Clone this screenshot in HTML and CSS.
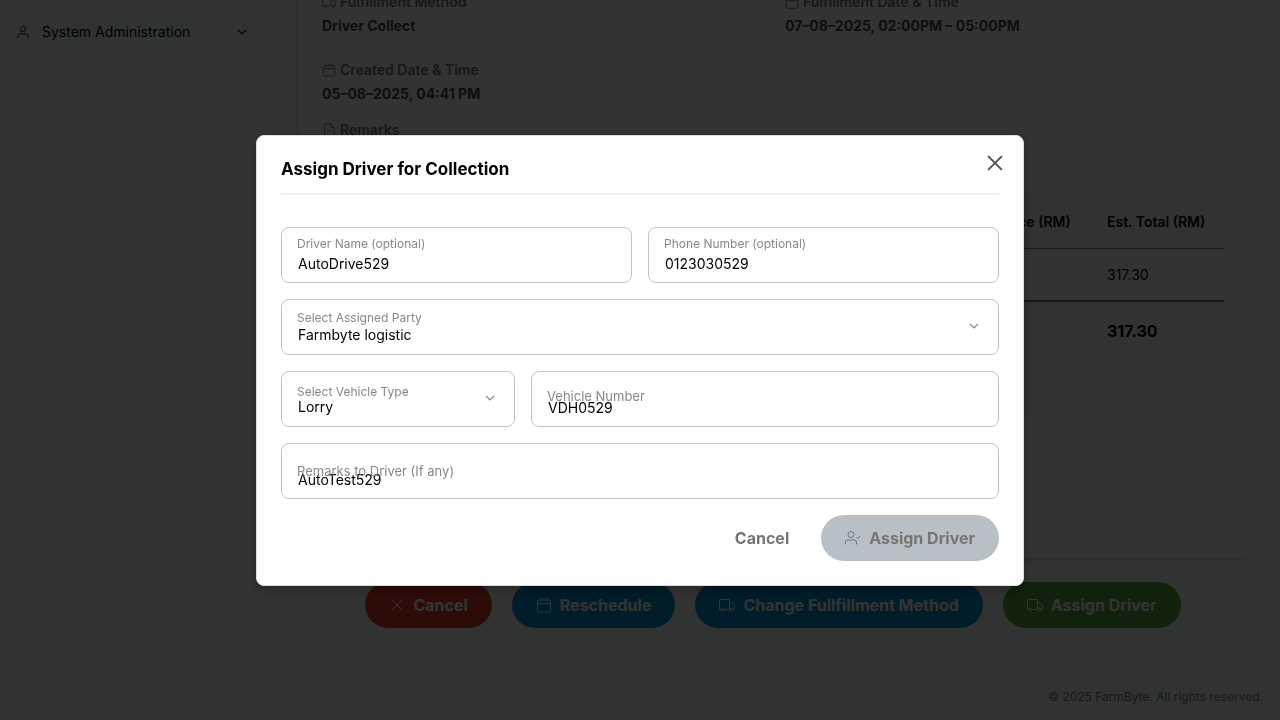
FILE: index.html
```html
<!DOCTYPE html>
<html lang="en">
<head>
<meta charset="utf-8">
<meta name="viewport" content="width=device-width, initial-scale=1">
<title>FarmByte - Assign Driver</title>
<link rel="stylesheet" href="styles.css">
</head>
<body>
<svg class="sprite" aria-hidden="true">
  <symbol id="calendar" viewBox="0 0 16 16"><rect x="1.5" y="3" width="13" height="12" rx="1"/><path d="M1.500 6.500h13M4.500 1v3.500M8 1v2M11.500 1v3.500"/></symbol>
  <symbol id="truck" viewBox="0 0 16 16"><path d="M2 12.500H.500v-10H10.500v10H5.500M10.500 5.500h2.500l2.500 3v4h-1M10.500 12.500h.500"/><circle cx="3.700" cy="12.800" r="1.600"/><circle cx="12.700" cy="12.800" r="1.600"/></symbol>
  <symbol id="file" viewBox="0 0 16 16"><path d="M3 1h7l4 4v10H3zM10 1v4h4M6 9h4.500"/></symbol>
  <symbol id="user" viewBox="0 0 16 16"><circle cx="8" cy="4.500" r="3"/><path d="M2 15v-2.500a2.500 2.500 0 0 1 2.500-2.500h7a2.500 2.500 0 0 1 2.500 2.500V15"/></symbol>
  <symbol id="user-check" viewBox="0 0 16 16"><circle cx="6" cy="4.500" r="3"/><path d="M.500 14.500v-2.500a2 2 0 0 1 2-2h7a2 2 0 0 1 2 2v2.500M11.300 7l1.400 1.500 3-3"/></symbol>
  <symbol id="cross" viewBox="0 0 16 16"><path d="M3 3l10 10M13 3L3 13"/></symbol>
  <symbol id="chevron" viewBox="0 0 12 12"><path d="M2 4l4 4 4-4"/></symbol>
</svg>

<div class="app">
  <nav class="sidebar">
    <button class="nav-item" type="button">
      <svg class="icon"><use href="#user"/></svg>
      <span>System Administration</span>
      <svg class="chevron"><use href="#chevron"/></svg>
    </button>
  </nav>

  <main class="main">
    <section class="card">
      <dl class="details">
        <div>
          <dt><svg class="icon"><use href="#truck"/></svg>Fulfillment Method</dt>
          <dd>Driver Collect</dd>
        </div>
        <div>
          <dt><svg class="icon"><use href="#calendar"/></svg>Fulfillment Date &amp; Time</dt>
          <dd>07–08–2025, 02:00PM – 05:00PM</dd>
        </div>
        <div>
          <dt><svg class="icon"><use href="#calendar"/></svg>Created Date &amp; Time</dt>
          <dd>05–08–2025, 04:41 PM</dd>
        </div>
      </dl>
      <dl class="remarks">
        <dt><svg class="icon"><use href="#file"/></svg>Remarks</dt>
        <dd></dd>
      </dl>
      <table class="items">
        <thead>
          <tr><td></td><th class="col-price" scope="col">Est. Price (RM)</th><th class="col-total" scope="col">Est. Total (RM)</th></tr>
        </thead>
        <tbody>
          <tr><td></td><td></td><td>317.30</td></tr>
        </tbody>
        <tfoot>
          <tr><td></td><td></td><td>317.30</td></tr>
        </tfoot>
      </table>
    </section>

    <div class="actions">
      <button class="btn btn-red" type="button"><svg class="icon"><use href="#cross"/></svg>Cancel</button>
      <button class="btn btn-blue" type="button"><svg class="icon"><use href="#calendar"/></svg>Reschedule</button>
      <button class="btn btn-blue" type="button"><svg class="icon"><use href="#truck"/></svg>Change Fullfillment Method</button>
      <button class="btn btn-green" type="button"><svg class="icon"><use href="#truck"/></svg>Assign Driver</button>
    </div>

    <footer class="footer">© 2025 FarmByte. All rights reserved.</footer>
  </main>
</div>

<div class="overlay">
  <form class="modal" role="dialog" aria-modal="true" aria-labelledby="modal-title">
    <h2 class="modal-title" id="modal-title">Assign Driver for Collection</h2>
    <button class="close" type="button" aria-label="Close"><svg><use href="#cross"/></svg></button>

    <div class="fields">
      <div class="row">
        <div class="field">
          <label class="label-top" for="driver">Driver Name (optional)</label>
          <input id="driver" type="text" value="AutoDrive529">
        </div>
        <div class="field">
          <label class="label-top" for="phone">Phone Number (optional)</label>
          <input id="phone" type="tel" value="0123030529">
        </div>
      </div>
      <div class="field">
        <label class="label-select" for="party">Select Assigned Party</label>
        <select id="party"><option>Farmbyte logistic</option></select>
        <svg class="chevron"><use href="#chevron"/></svg>
      </div>
      <div class="row row-vehicle">
        <div class="field">
          <label class="label-select-low" for="type">Select Vehicle Type</label>
          <select id="type"><option>Lorry</option></select>
          <svg class="chevron"><use href="#chevron"/></svg>
        </div>
        <div class="field">
          <label class="label-low" for="number">Vehicle Number</label>
          <input id="number" type="text" value="VDH0529">
        </div>
      </div>
      <div class="field">
        <label class="label-middle" for="remarks">Remarks to Driver (If any)</label>
        <input id="remarks" type="text" value="AutoTest529">
      </div>
    </div>

    <div class="modal-actions">
      <button class="btn btn-text" type="button">Cancel</button>
      <button class="btn btn-disabled" type="submit" disabled><svg class="icon"><use href="#user-check"/></svg>Assign Driver</button>
    </div>
  </form>
</div>
</body>
</html>
```
FILE: styles.css
```css
* { box-sizing: border-box; }

body {
  margin: 0;
  background: #f6fdfa;
  color: #000;
  font: 14px/24px Inter, "Liberation Sans", sans-serif;
}

button, input, select { font: inherit; color: inherit; }
button { cursor: pointer; }

svg { flex: none; fill: none; stroke: currentColor; }
.sprite { display: none; }
.icon { width: 14px; height: 14px; }
.chevron { width: 12px; height: 12px; stroke-width: 1.2; }

/* Page */
.app {
  display: grid;
  grid-template-columns: 298px minmax(0, 1fr);
  height: 100vh;
  overflow: hidden;
}

.sidebar {
  padding: 20px 49px 0 16px;
  border-right: 1px solid #f0f5f3;
}
.nav-item {
  display: flex;
  align-items: center;
  gap: 12px;
  width: 100%;
  padding: 0;
  border: 0;
  background: none;
}
.nav-item .chevron { margin-left: auto; }

.main {
  display: flex;
  flex-direction: column;
  justify-content: flex-end;
  min-height: 0;
  padding-bottom: 15px;
}

.card {
  margin-right: 32px;
  padding: 24px 24px 145px;
  border-radius: 8px;
  background: #fff;
  box-shadow: 0 2px 4px rgb(0 0 0 / 14%);
}
.details {
  display: grid;
  grid-template-columns: 1fr 1fr;
  gap: 20px 24px;
  margin: 0 0 12px;
}
.remarks { margin: 0 0 30px; }
dt {
  display: flex;
  align-items: center;
  gap: 4px;
  color: #757575;
  font-weight: 600;
}
dd {
  min-height: 24px;
  margin: 0;
  color: #484848;
  font-weight: 700;
}

.items {
  width: 100%;
  border-collapse: collapse;
}
.items th, .items td {
  height: 52px;
  padding: 14px 16px 12px;
  text-align: left;
  vertical-align: top;
}
.items thead { background: #f8f8f8; }
.items thead tr { border-bottom: 1px solid #808080; }
.items tbody tr { border-bottom: 2px solid #707070; }
.items tbody td { height: 53px; }
.items th { font-weight: 600; }
.col-price { width: 136px; }
.col-total { width: 133px; }
.items tfoot { background: #f8f8f8; }
.items tfoot td {
  height: 112px;
  padding-top: 17px;
  font-size: 16px;
  font-weight: 700;
}

.btn {
  display: inline-flex;
  align-items: center;
  gap: 8px;
  height: 46px;
  padding: 0 24px;
  border: 0;
  border-radius: 23px;
  color: #fff;
  font-size: 16px;
  font-weight: 700;
  white-space: nowrap;
}
.btn .icon { width: 16px; height: 16px; }
.btn-red { background: #e23a24; }
.btn-blue { background: #048fcb; }
.btn-green { background: #53a838; }

.actions {
  display: flex;
  justify-content: center;
  gap: 20px;
  margin: 24px 32px 61px 0;
}

.footer {
  padding-right: 17px;
  color: #7c7c7c;
  font-size: 12px;
  line-height: 16px;
  text-align: right;
}

/* Dialog */
.overlay {
  position: fixed;
  inset: 0;
  display: grid;
  place-items: center;
  background: rgb(0 0 0 / 80%);
}
.modal {
  position: relative;
  width: 60%;
  padding: 24px;
  border: 1px solid #ddd;
  border-radius: 8px;
  background: #fff;
  box-shadow: 0 4px 12px rgb(0 0 0 / 30%);
}
.modal-title {
  margin: 0 0 32px;
  padding-bottom: 15px;
  border-bottom: 2px solid #f0f0f0;
  font-size: 17px;
  font-weight: 700;
  line-height: 18px;
}
.close {
  position: absolute;
  top: 15px;
  right: 16px;
  display: grid;
  place-items: center;
  width: 24px;
  height: 24px;
  padding: 0;
  border: 0;
  background: none;
  color: #555;
}
.close svg { width: 22px; height: 22px; stroke-width: 1.5; }

.fields {
  display: grid;
  gap: 16px;
}
.row {
  display: grid;
  grid-template-columns: 1fr 1fr;
  gap: 16px;
}
.row-vehicle { grid-template-columns: 1fr 2fr; }

.field { position: relative; }
.field input, .field select {
  display: block;
  width: 100%;
  height: 56px;
  padding: 18px 16px 0;
  border: 1px solid #c2c2c2;
  border-radius: 8px;
  background: #fff;
  appearance: none;
  outline: none;
}
.field select { padding-top: 16px; }

/* Labels lie over their controls */
.field label {
  position: absolute;
  left: 16px;
  color: #888;
  font-size: 12px;
  line-height: 16px;
  pointer-events: none;
}
.label-top { top: 9px; }
.label-select { top: 11px; }
.label-select-low { top: 13px; }
.field .label-low { top: 17px; font-size: 13px; }
.field .label-middle { top: 20px; font-size: 13px; }
.field .chevron {
  position: absolute;
  top: 21px;
  right: 19px;
  color: #888;
  pointer-events: none;
}

.modal-actions {
  display: flex;
  justify-content: flex-end;
  gap: 8px;
  margin-top: 16px;
}
.btn-text { background: none; color: #757575; }
.btn-disabled { background: #b9c0c5; color: #757575; cursor: default; }
```
